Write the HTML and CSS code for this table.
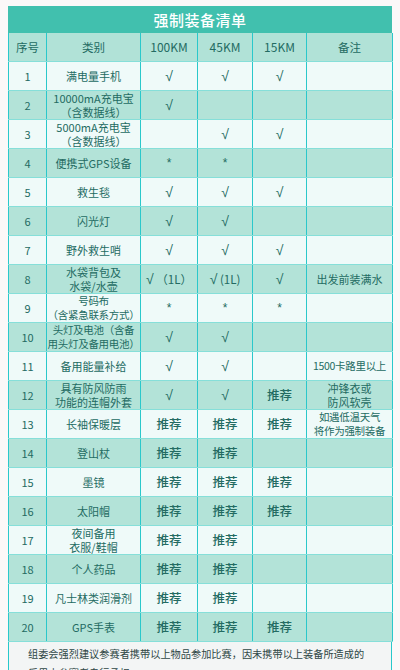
FILE: index.html
```html
<!DOCTYPE html>
<html lang="zh">
<head>
<meta charset="utf-8">
<link rel="stylesheet" href="styles.css">
</head>
<body>
<div class="sheet">
  <div class="title">强制装备清单</div>
  <table class="list">
    <colgroup>
      <col class="c-no"><col class="c-cat"><col class="c-100"><col class="c-45"><col class="c-15"><col class="c-note">
    </colgroup>
    <thead>
      <tr><th>序号</th><th>类别</th><th class="lat">100KM</th><th class="lat">45KM</th><th class="lat">15KM</th><th>备注</th></tr>
    </thead>
    <tbody>
      <tr><td>1</td><td>满电量手机</td><td class="ck">√</td><td class="ck">√</td><td class="ck">√</td><td></td></tr>
      <tr><td>2</td><td class="two">10000mA充电宝<br>（含数据线）</td><td class="ck">√</td><td></td><td></td><td></td></tr>
      <tr><td>3</td><td class="two">5000mA充电宝<br>（含数据线）</td><td></td><td class="ck">√</td><td class="ck">√</td><td></td></tr>
      <tr><td>4</td><td>便携式GPS设备</td><td class="st">*</td><td class="st">*</td><td></td><td></td></tr>
      <tr><td>5</td><td>救生毯</td><td class="ck">√</td><td class="ck">√</td><td class="ck">√</td><td></td></tr>
      <tr><td>6</td><td>闪光灯</td><td class="ck">√</td><td class="ck">√</td><td></td><td></td></tr>
      <tr><td>7</td><td>野外救生哨</td><td class="ck">√</td><td class="ck">√</td><td class="ck">√</td><td></td></tr>
      <tr><td>8</td><td class="two">水袋背包及<br>水袋/水壶</td><td class="sm"><span class="mark">√</span> （1L）</td><td class="sm"><span class="mark">√</span> (1L)</td><td class="ck">√</td><td>出发前装满水</td></tr>
      <tr><td>9</td><td class="two tight">号码布<br>（含紧急联系方式）</td><td class="st">*</td><td class="st">*</td><td class="st">*</td><td></td></tr>
      <tr><td>10</td><td class="two tight">头灯及电池（含备<br>用头灯及备用电池）</td><td class="ck">√</td><td class="ck">√</td><td></td><td></td></tr>
      <tr><td>11</td><td>备用能量补给</td><td class="ck">√</td><td class="ck">√</td><td></td><td class="tight">1500卡路里以上</td></tr>
      <tr><td>12</td><td class="two">具有防风防雨<br>功能的连帽外套</td><td class="ck">√</td><td class="ck">√</td><td class="rec">推荐</td><td class="two">冲锋衣或<br>防风软壳</td></tr>
      <tr><td>13</td><td>长袖保暖层</td><td class="rec">推荐</td><td class="rec">推荐</td><td class="rec">推荐</td><td class="two tight">如遇低温天气<br>将作为强制装备</td></tr>
      <tr><td>14</td><td>登山杖</td><td class="rec">推荐</td><td class="rec">推荐</td><td></td><td></td></tr>
      <tr><td>15</td><td>墨镜</td><td class="rec">推荐</td><td class="rec">推荐</td><td class="rec">推荐</td><td></td></tr>
      <tr><td>16</td><td>太阳帽</td><td class="rec">推荐</td><td class="rec">推荐</td><td class="rec">推荐</td><td></td></tr>
      <tr><td>17</td><td class="two">夜间备用<br>衣服/鞋帽</td><td class="rec">推荐</td><td class="rec">推荐</td><td></td><td></td></tr>
      <tr><td>18</td><td>个人药品</td><td class="rec">推荐</td><td class="rec">推荐</td><td></td><td></td></tr>
      <tr><td>19</td><td>凡士林类润滑剂</td><td class="rec">推荐</td><td class="rec">推荐</td><td></td><td></td></tr>
      <tr><td>20</td><td>GPS手表</td><td class="rec">推荐</td><td class="rec">推荐</td><td class="rec">推荐</td><td></td></tr>
    </tbody>
  </table>
  <div class="foot">组委会强烈建议参赛者携带以上物品参加比赛，因未携带以上装备所造成的<br>后果由参赛者自行承担：</div>
</div>
</body>
</html>
```
FILE: styles.css
```css
html, body {
  margin: 0;
  padding: 0;
  background: #fbf8f8;
}
body {
  font-family: "Noto Sans CJK SC", "Noto Sans", sans-serif;
  color: #236b62;
}
.sheet {
  margin: 6px 8px 0 8px;
  width: 384px;
}
.title {
  height: 27px;
  line-height: 27px;
  background: #41c0ae;
  color: #ffffff;
  text-align: center;
  font-size: 15px;
  font-weight: 500;
  letter-spacing: 0.5px;
}
.list {
  width: 384px;
  border-collapse: collapse;
  table-layout: fixed;
}
.c-no { width: 38px; }
.c-cat { width: 94px; }
.c-100 { width: 57px; }
.c-45 { width: 55px; }
.c-15 { width: 54px; }
.c-note { width: 86px; }
.list th, .list td {
  height: 28px;
  padding: 0;
  text-align: center;
  vertical-align: middle;
  border-left: 1px solid #2ac8cb;
  border-right: 1px solid #2ac8cb;
  border-bottom: 1px solid #86dfd9;
  font-size: 11px;
  line-height: 14px;
  font-weight: 400;
  white-space: nowrap;
}
.list th {
  background: #b1e2d7;
  font-size: 11.5px;
}
.list th.lat {
  font-size: 12px;
}
.list tbody tr:nth-child(odd) td {
  background: #effaf9;
}
.list tbody tr:nth-child(even) td {
  background: #b3e3d8;
}
.list td.ck,
.mark {
  font-family: "Liberation Sans", "DejaVu Sans", sans-serif;
  font-size: 14px;
}
.list td.sm {
  font-size: 11.5px;
}
.list td.st {
  font-family: "Liberation Sans", sans-serif;
  font-size: 12px;
}
.list td.rec {
  font-size: 12.5px;
  font-weight: 500;
}
.list td.tight {
  font-size: 10.5px;
  letter-spacing: -0.3px;
}
.foot {
  border-left: 1px solid #2ac8cb;
  border-right: 1px solid #2ac8cb;
  background: #f3f5f5;
  padding: 2px 10px 0 19px;
  font-size: 10.2px;
  line-height: 19px;
  color: #2f4745;
  white-space: nowrap;
}
```
